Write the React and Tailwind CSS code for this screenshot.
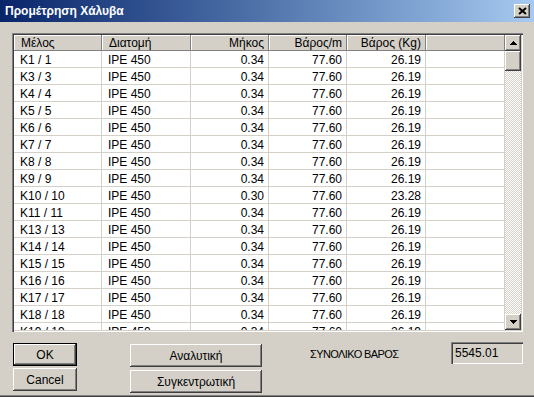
import React from "react";

const rows = [
  ["K1 / 1", "0.34", "26.19"],
  ["K3 / 3", "0.34", "26.19"],
  ["K4 / 4", "0.34", "26.19"],
  ["K5 / 5", "0.34", "26.19"],
  ["K6 / 6", "0.34", "26.19"],
  ["K7 / 7", "0.34", "26.19"],
  ["K8 / 8", "0.34", "26.19"],
  ["K9 / 9", "0.34", "26.19"],
  ["K10 / 10", "0.30", "23.28"],
  ["K11 / 11", "0.34", "26.19"],
  ["K13 / 13", "0.34", "26.19"],
  ["K14 / 14", "0.34", "26.19"],
  ["K15 / 15", "0.34", "26.19"],
  ["K16 / 16", "0.34", "26.19"],
  ["K17 / 17", "0.34", "26.19"],
  ["K18 / 18", "0.34", "26.19"],
  ["K19 / 19", "0.34", "26.19"],
];

const raised =
  "shadow-[inset_-1px_-1px_#404040,inset_1px_1px_#ffffff,inset_-2px_-2px_#808080,inset_2px_2px_#d4d0c8]";

function HeaderCell({ w, children, right }) {
  return (
    <div
      className={`${w} h-full shrink-0 flex items-center px-[6px] bg-[#d4d0c8] shadow-[inset_-1px_-1px_#808080,inset_1px_1px_#ffffff] ${
        right ? "justify-end pr-[5px]" : "pl-[7px]"
      }`}
    >
      {children}
    </div>
  );
}

function Cell({ w, children, right }) {
  return (
    <div
      className={`${w} h-full shrink-0 flex items-center px-[6px] pt-[1px] border-r border-[#d4d0c8] ${
        right ? "justify-end pr-[4px]" : ""
      }`}
    >
      {children}
    </div>
  );
}

function Arrow({ up }) {
  return (
    <svg width="7" height="4" viewBox="0 0 7 4" className="block">
      {up ? (
        <path d="M3.5 0 L7 4 L0 4 Z" fill="#000" shapeRendering="crispEdges" />
      ) : (
        <path d="M0 0 L7 0 L3.5 4 Z" fill="#000" shapeRendering="crispEdges" />
      )}
    </svg>
  );
}

export default function App() {
  return (
    <div className="w-[534px] h-[397px] bg-[#d4d0c8] flex flex-col font-['Liberation_Sans',Arial,sans-serif] text-[12px] text-black overflow-hidden">
      {/* Title bar */}
      <div className="h-[22px] shrink-0 flex items-center justify-between bg-linear-to-r from-[#0a246a] to-[#a6caf0] pl-[5px] pr-[4px]">
        <span className="text-white font-bold text-[12px] leading-none">
          Προμέτρηση Χάλυβα
        </span>
        <div
          className={`w-[16px] h-[14px] bg-[#d4d0c8] flex items-center justify-center ${raised}`}
        >
          <svg width="9" height="8" viewBox="0 0 9 8" className="block">
            <path
              d="M1 1 L8 7 M8 1 L1 7"
              stroke="#000"
              strokeWidth="2"
              fill="none"
            />
          </svg>
        </div>
      </div>

      {/* List */}
      <div className="mt-[11px] ml-[12px] w-[511px] h-[299px] shrink-0 p-[2px] bg-white shadow-[inset_1px_1px_#808080,inset_2px_2px_#404040,inset_-1px_-1px_#ffffff,inset_-2px_-2px_#d4d0c8]">
        <div className="flex h-full w-full">
          <div className="flex-1 flex flex-col overflow-hidden">
            <div className="h-[16px] shrink-0 flex leading-none">
              <HeaderCell w="w-[88px]">Μέλος</HeaderCell>
              <HeaderCell w="w-[89px]">Διατομή</HeaderCell>
              <HeaderCell w="w-[78px]" right>
                Μήκος
              </HeaderCell>
              <HeaderCell w="w-[78px]" right>
                Βάρος/m
              </HeaderCell>
              <HeaderCell w="w-[79px]" right>
                Βάρος (Kg)
              </HeaderCell>
              <HeaderCell w="flex-1" />
            </div>
            {rows.map((r) => (
              <div
                key={r[0]}
                className="h-[17px] shrink-0 flex border-b border-[#d4d0c8] leading-none"
              >
                <Cell w="w-[88px]">{r[0]}</Cell>
                <Cell w="w-[89px]">IPE 450</Cell>
                <Cell w="w-[78px]" right>
                  {r[1]}
                </Cell>
                <Cell w="w-[78px]" right>
                  77.60
                </Cell>
                <Cell w="w-[79px]" right>
                  {r[2]}
                </Cell>
                <Cell w="flex-1" />
              </div>
            ))}
          </div>
          {/* Scrollbar */}
          <div className="w-[16px] shrink-0 flex flex-col bg-[image:repeating-conic-gradient(#d4d0c8_0%_25%,#ffffff_0%_50%)] bg-[length:2px_2px]">
            <div className={`h-[16px] shrink-0 bg-[#d4d0c8] flex items-center justify-center ${raised}`}>
              <Arrow up />
            </div>
            <div className={`h-[20px] shrink-0 bg-[#d4d0c8] ${raised}`} />
            <div className="flex-1" />
            <div className={`h-[16px] shrink-0 bg-[#d4d0c8] flex items-center justify-center ${raised}`}>
              <Arrow />
            </div>
          </div>
        </div>
      </div>

      {/* Bottom controls */}
      <div className="flex mt-[11px] ml-[13px] flex-1">
        <div className="flex flex-col gap-[2px] w-[64px]">
          <div className="h-[23px] border border-black">
            <div className={`h-full flex items-center justify-center bg-[#d4d0c8] ${raised}`}>
              OK
            </div>
          </div>
          <div className={`h-[23px] flex items-center justify-center bg-[#d4d0c8] ${raised}`}>
            Cancel
          </div>
        </div>
        <div className="flex flex-col gap-[3px] w-[132px] ml-[53px] mt-[1px]">
          <div className={`h-[23px] flex items-center justify-center ${raised}`}>
            Αναλυτική
          </div>
          <div className={`h-[23px] flex items-center justify-center ${raised}`}>
            Συγκεντρωτική
          </div>
        </div>
        <div className="ml-[48px] mt-[3px] h-[16px] flex items-center tracking-[-0.6px] text-[11px]">
          ΣΥΝΟΛΙΚΟ ΒΑΡΟΣ
        </div>
        <div className="ml-auto mr-[11px] mt-[-1px] w-[72px] h-[22px] flex items-center pl-[4px] shadow-[inset_1px_1px_#808080,inset_2px_2px_#404040,inset_-1px_-1px_#ffffff,inset_-2px_-2px_#d4d0c8]">
          5545.01
        </div>
      </div>
      <div className="h-px shrink-0 bg-[#808080]" />
      <div className="h-px shrink-0 bg-[#404040]" />
    </div>
  );
}
